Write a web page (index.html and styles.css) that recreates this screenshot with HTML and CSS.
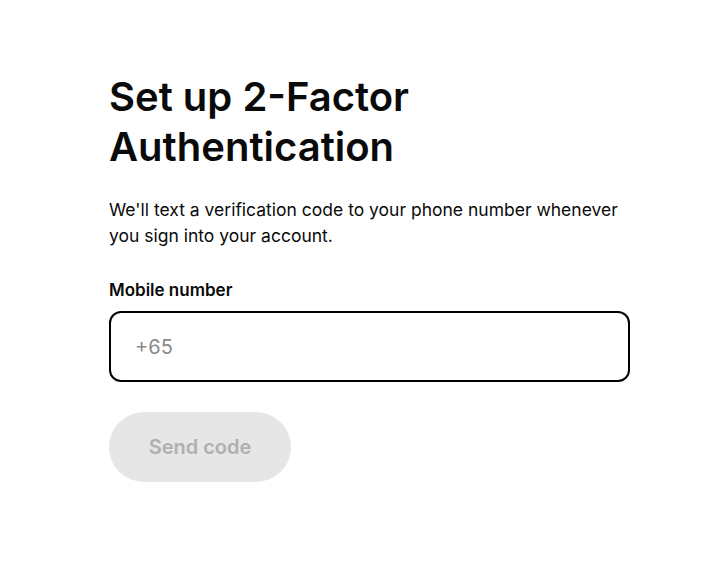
FILE: index.html
```html
<!DOCTYPE html>
<html>
<head>
    <link rel="stylesheet" href="styles.css">
</head>
<body>
    <div class="setup-container">
        <h1 class="setup-title">Set up 2-Factor<br>Authentication</h1>
        <p class="setup-text">We'll text a verification code to your phone number whenever you sign into your account.</p>
        <form class="setup-form">
            <div class="form-group">
                <label for="mobileInput">Mobile number</label>
                <input type="tel" id="mobileInput" name="mobile" placeholder="+65">
            </div>
            <button type="submit" class="send-btn" disabled>Send code</button>
        </form>
    </div>
</body>
</html>
```

FILE: styles.css
```css
body {
    font-family: Inter, "Noto Sans", sans-serif;
    background-color: #fff;
    color: #0a0a0a;
    margin: 0;
    padding: 0;
}

.setup-container {
    width: 521px;
    padding: 72px 0 0 109px;
}

.setup-title {
    font-size: 40px;
    font-weight: 600;
    line-height: 50px;
    margin: 0 0 25px 0;
}

.setup-text {
    font-size: 17.5px;
    line-height: 26px;
    margin: 0 0 31px 0;
}

.form-group label {
    display: block;
    font-size: 17px;
    font-weight: 600;
    margin-bottom: 11px;
}

.form-group input[type="tel"] {
    box-sizing: border-box;
    width: 521px;
    height: 71px;
    padding: 0 24px;
    border: 2px solid #000;
    border-radius: 12px;
    font-family: inherit;
    font-size: 20px;
    outline: none;
}

.form-group input::placeholder {
    color: #8a8a8a;
}

.send-btn {
    margin-top: 30px;
    width: 182px;
    height: 70px;
    border: none;
    border-radius: 35px;
    background-color: #e6e6e6;
    color: #b0b0b0;
    font-family: inherit;
    font-size: 20px;
    font-weight: 600;
}
```
